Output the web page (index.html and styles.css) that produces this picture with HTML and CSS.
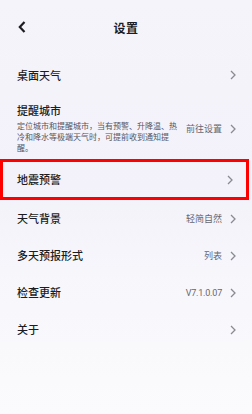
FILE: index.html
```html
<!DOCTYPE html>
<html lang="zh">
<head>
<meta charset="utf-8">
<link rel="stylesheet" href="styles.css">
</head>
<body>
<div class="page">
  <header class="topbar">
    <svg class="back" width="8" height="12" viewBox="0 0 8 12"><path d="M6.5 1 L1.8 6 L6.5 11" fill="none" stroke="#1c1c22" stroke-width="2.2" stroke-linejoin="miter"/></svg>
    <div class="title">设置</div>
  </header>
  <div class="list">
    <div class="row">
      <span class="label">桌面天气</span>
      <span class="right"><svg class="chev" width="6" height="10" viewBox="0 0 6 10"><path d="M1 1 L5 5 L1 9" fill="none" stroke="#8a8a92" stroke-width="1.3"/></svg></span>
    </div>
    <div class="row multi">
      <div class="col">
        <span class="label">提醒城市</span>
        <span class="desc">定位城市和提醒城市，当有预警、升降温、热冷和降水等极端天气时，可提前收到通知提醒。</span>
      </div>
      <span class="right"><span class="value">前往设置</span><svg class="chev" width="6" height="10" viewBox="0 0 6 10"><path d="M1 1 L5 5 L1 9" fill="none" stroke="#8a8a92" stroke-width="1.3"/></svg></span>
    </div>
    <div class="row marked">
      <span class="label">地震预警</span>
      <span class="right"><svg class="chev" width="6" height="10" viewBox="0 0 6 10"><path d="M1 1 L5 5 L1 9" fill="none" stroke="#8a8a92" stroke-width="1.3"/></svg></span>
    </div>
    <div class="row">
      <span class="label">天气背景</span>
      <span class="right"><span class="value">轻简自然</span><svg class="chev" width="6" height="10" viewBox="0 0 6 10"><path d="M1 1 L5 5 L1 9" fill="none" stroke="#8a8a92" stroke-width="1.3"/></svg></span>
    </div>
    <div class="row">
      <span class="label">多天预报形式</span>
      <span class="right"><span class="value">列表</span><svg class="chev" width="6" height="10" viewBox="0 0 6 10"><path d="M1 1 L5 5 L1 9" fill="none" stroke="#8a8a92" stroke-width="1.3"/></svg></span>
    </div>
    <div class="row">
      <span class="label">检查更新</span>
      <span class="right"><span class="value ver">V7.1.0.07</span><svg class="chev" width="6" height="10" viewBox="0 0 6 10"><path d="M1 1 L5 5 L1 9" fill="none" stroke="#8a8a92" stroke-width="1.3"/></svg></span>
    </div>
    <div class="row">
      <span class="label">关于</span>
      <span class="right"><svg class="chev" width="6" height="10" viewBox="0 0 6 10"><path d="M1 1 L5 5 L1 9" fill="none" stroke="#8a8a92" stroke-width="1.3"/></svg></span>
    </div>
  </div>
</div>
</body>
</html>
```

FILE: styles.css
```css
* { box-sizing: border-box; }
html, body {
  margin: 0;
  padding: 0;
}
body {
  width: 252px;
  height: 414px;
  overflow: hidden;
  font-family: "Noto Sans CJK SC", "Noto Sans", sans-serif;
  color: #1c1c22;
  background: linear-gradient(180deg, #f5f4fa 0%, #f3f2fa 45%, #f8f8fc 75%, #fbfbfd 100%);
}
.page {
  display: flex;
  flex-direction: column;
}
.topbar {
  height: 57px;
  position: relative;
  display: flex;
  align-items: center;
  justify-content: center;
  padding-bottom: 2px;
}
.back {
  position: absolute;
  left: 18px;
  top: 21px;
}
.title {
  font-size: 12px;
  font-weight: 700;
  letter-spacing: 0.5px;
}
.list {
  display: flex;
  flex-direction: column;
}
.row {
  height: 37px;
  display: flex;
  align-items: center;
  justify-content: space-between;
  padding: 0 16px 0 17px;
}
.row:first-child { height: 36px; }
.row.multi {
  height: 66px;
  align-items: flex-start;
  padding-top: 11px;
}
.row.multi .right { margin-top: 18px; }
.row.marked {
  height: 41px;
  margin-right: 3px;
  border: 3px solid #ff0000;
  padding-left: 14px;
  padding-right: 13px;
}
.col {
  display: flex;
  flex-direction: column;
  gap: 3px;
  flex: 0 0 auto;
}
.label {
  font-size: 11px;
  line-height: 13px;
  font-weight: 500;
}
.desc {
  font-size: 8px;
  line-height: 11px;
  color: #55555c;
  width: 163px;
}
.right {
  display: flex;
  align-items: center;
  gap: 8px;
}
.value {
  font-size: 9px;
  color: #66666e;
}
.ver {
  font-family: "Roboto", "Noto Sans", sans-serif;
  font-size: 9px;
  letter-spacing: -0.2px;
}
.chev { display: block; }
```
